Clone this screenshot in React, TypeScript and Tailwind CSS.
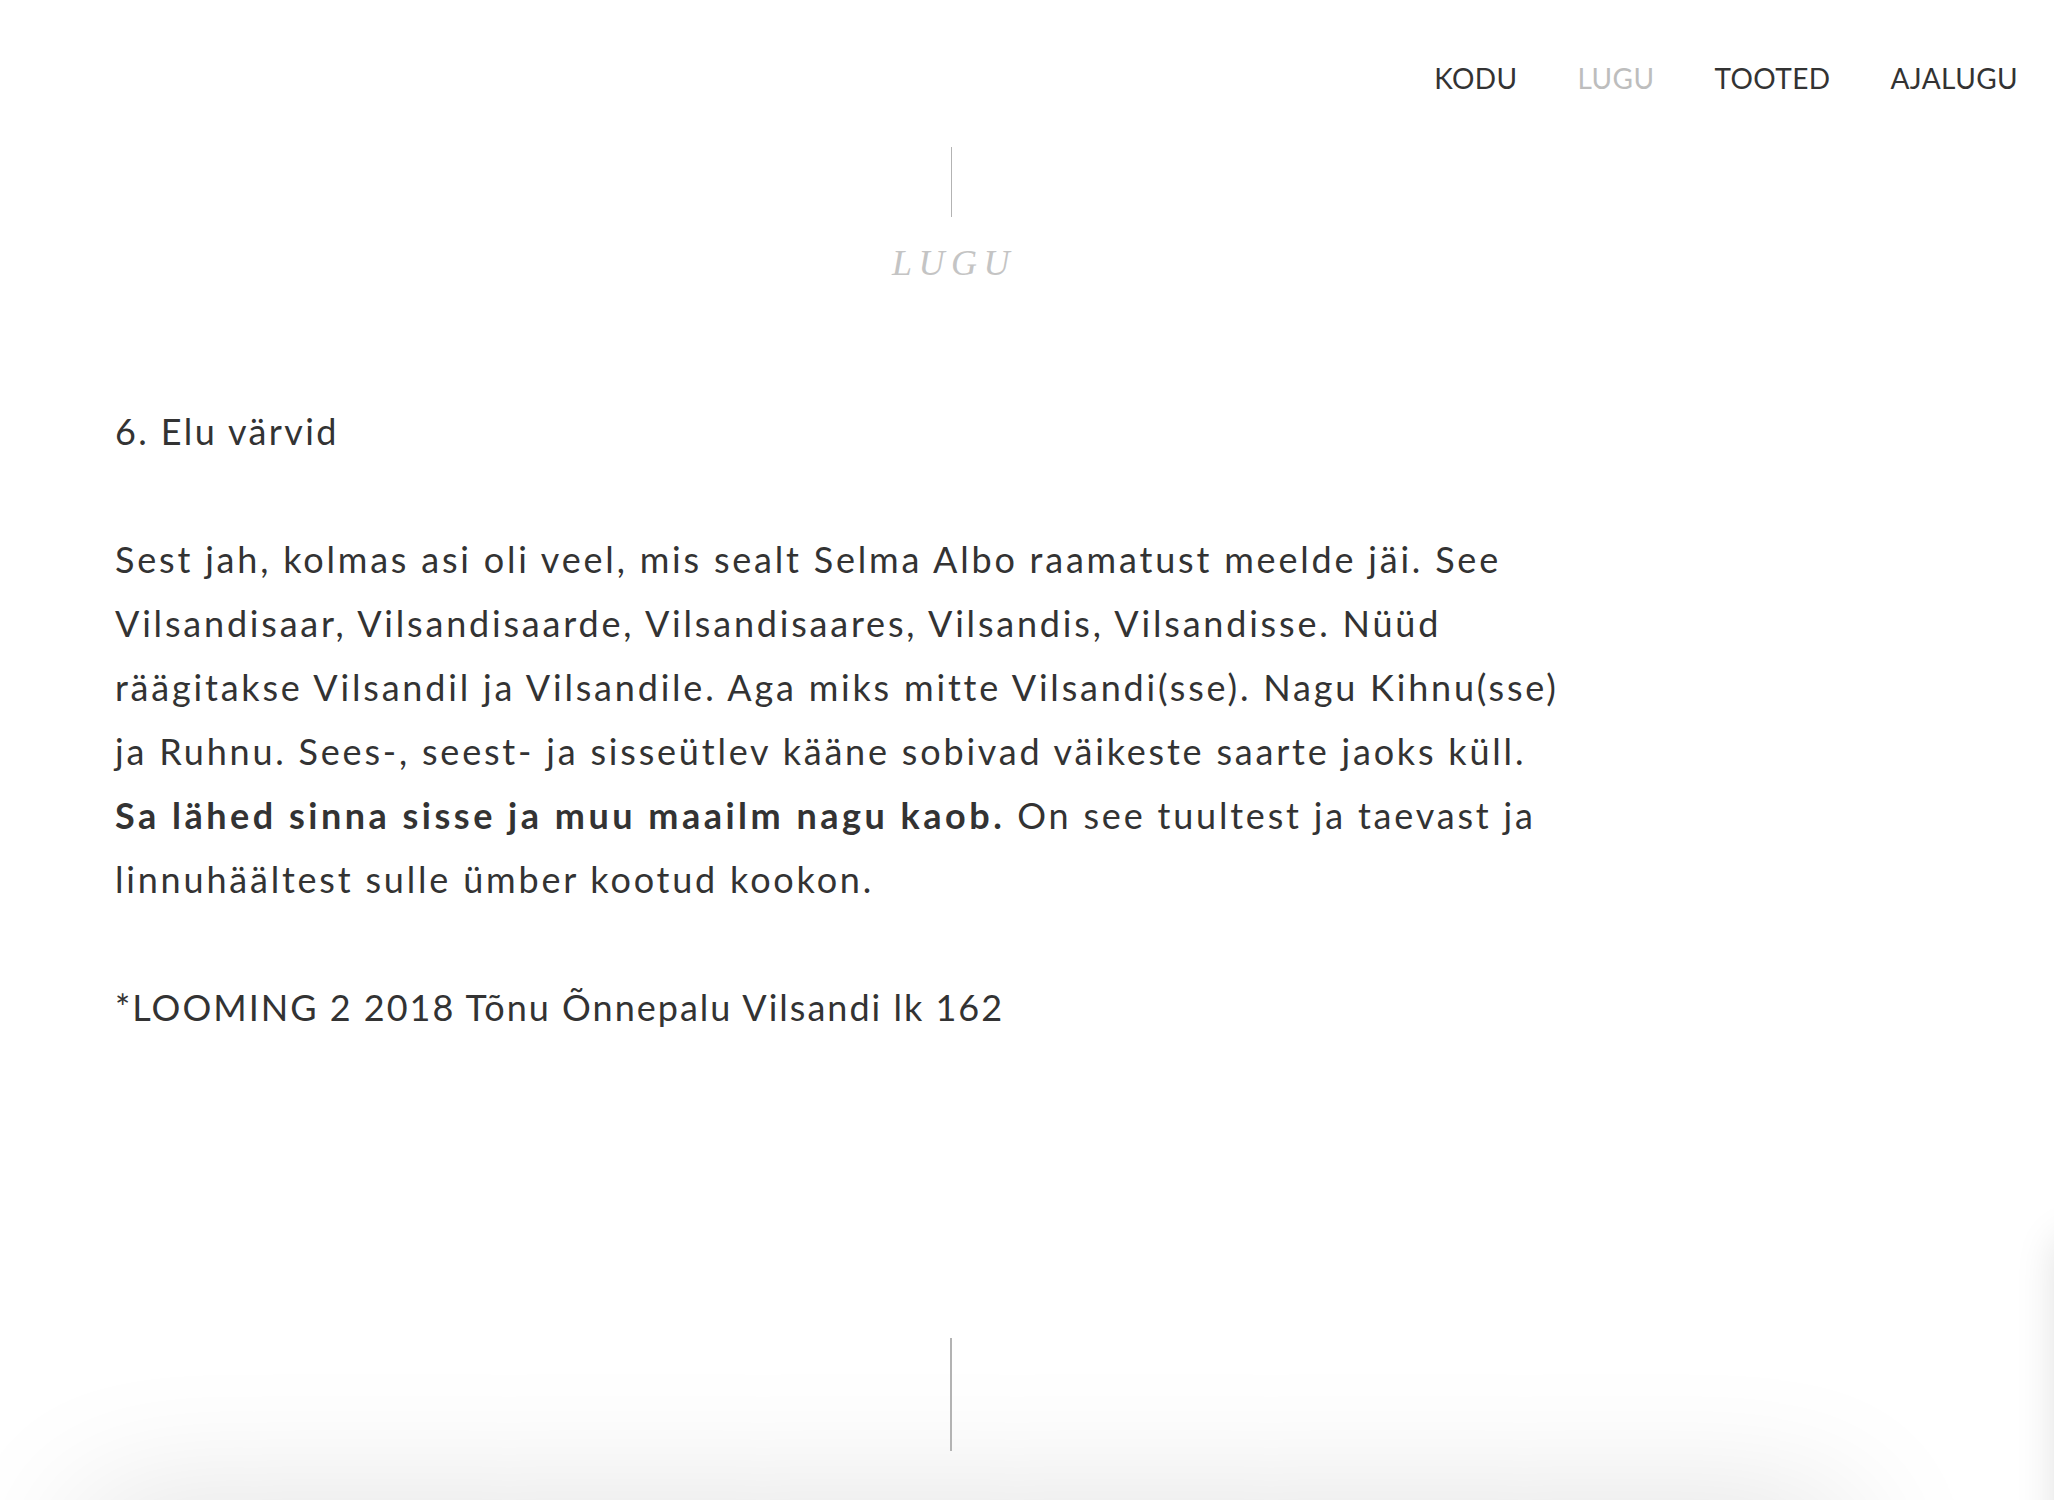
import * as React from "react";

const navItems = [
  { label: "KODU", active: false },
  { label: "LUGU", active: true },
  { label: "TOOTED", active: false },
  { label: "AJALUGU", active: false },
];

const bodyFont = { fontFamily: "Lato, 'Open Sans', sans-serif" };

export default function App() {
  return (
    <div className="relative h-[1500px] w-full overflow-hidden bg-white text-[#333]" style={bodyFont}>
      <header className="flex justify-end pr-[36px] pt-[58px]">
        <nav className="flex gap-[60px] text-[28px] leading-[40px] tracking-[0.4px]">
          {navItems.map((item) => (
            <a key={item.label} href="#" className={item.active ? "text-[#bdbdbd]" : "text-[#333]"}>
              {item.label}
            </a>
          ))}
        </nav>
      </header>

      <section className="flex w-[1902px] flex-col items-center">
        <div className="mt-[49px] h-[70px] w-px bg-[#b3b3b3]" />
        <h2
          className="mt-[26px] pl-[6px] text-[36px] italic leading-[40px] tracking-[0.18em] text-[#c4c4c4]"
          style={{ fontFamily: "'Liberation Serif', 'DejaVu Serif', serif" }}
        >
          LUGU
        </h2>
      </section>

      <article className="mt-[116px] pl-[115px] text-[36px] leading-[64px] whitespace-nowrap tracking-[2.8px]">
        <p className="tracking-[2.4px]">6. Elu värvid</p>
        <p className="mt-[64px]">
          Sest jah, kolmas asi oli veel, mis sealt Selma Albo raamatust meelde jäi. See
          <br />
          Vilsandisaar, Vilsandisaarde, Vilsandisaares, Vilsandis, Vilsandisse. Nüüd
          <br />
          räägitakse Vilsandil ja Vilsandile. Aga miks mitte Vilsandi(sse). Nagu Kihnu(sse)
          <br />
          ja Ruhnu. Sees-, seest- ja sisseütlev kääne sobivad väikeste saarte jaoks küll.
          <br />
          <strong className="font-bold tracking-[3.5px]">Sa lähed sinna sisse ja muu maailm nagu kaob.</strong> On see tuultest ja taevast ja
          <br />
          linnuhäältest sulle ümber kootud kookon.
        </p>
        <p className="mt-[64px] tracking-[2px]">*LOOMING 2 2018 Tõnu Õnnepalu Vilsandi lk 162</p>
      </article>

      <div className="mt-[299px] flex w-[1902px] justify-center">
        <div className="h-[113px] w-[2px] bg-[#b3b3b3]" />
      </div>

      <div className="mt-[51px] ml-[80px] h-[300px] w-[1770px] rounded-[40px] bg-white shadow-[0_0_140px_rgba(0,0,0,0.13)]" />

      <div className="absolute left-[2058px] top-[1240px] h-[400px] w-[200px] shadow-[0_0_40px_rgba(0,0,0,0.14)]" />
    </div>
  );
}
